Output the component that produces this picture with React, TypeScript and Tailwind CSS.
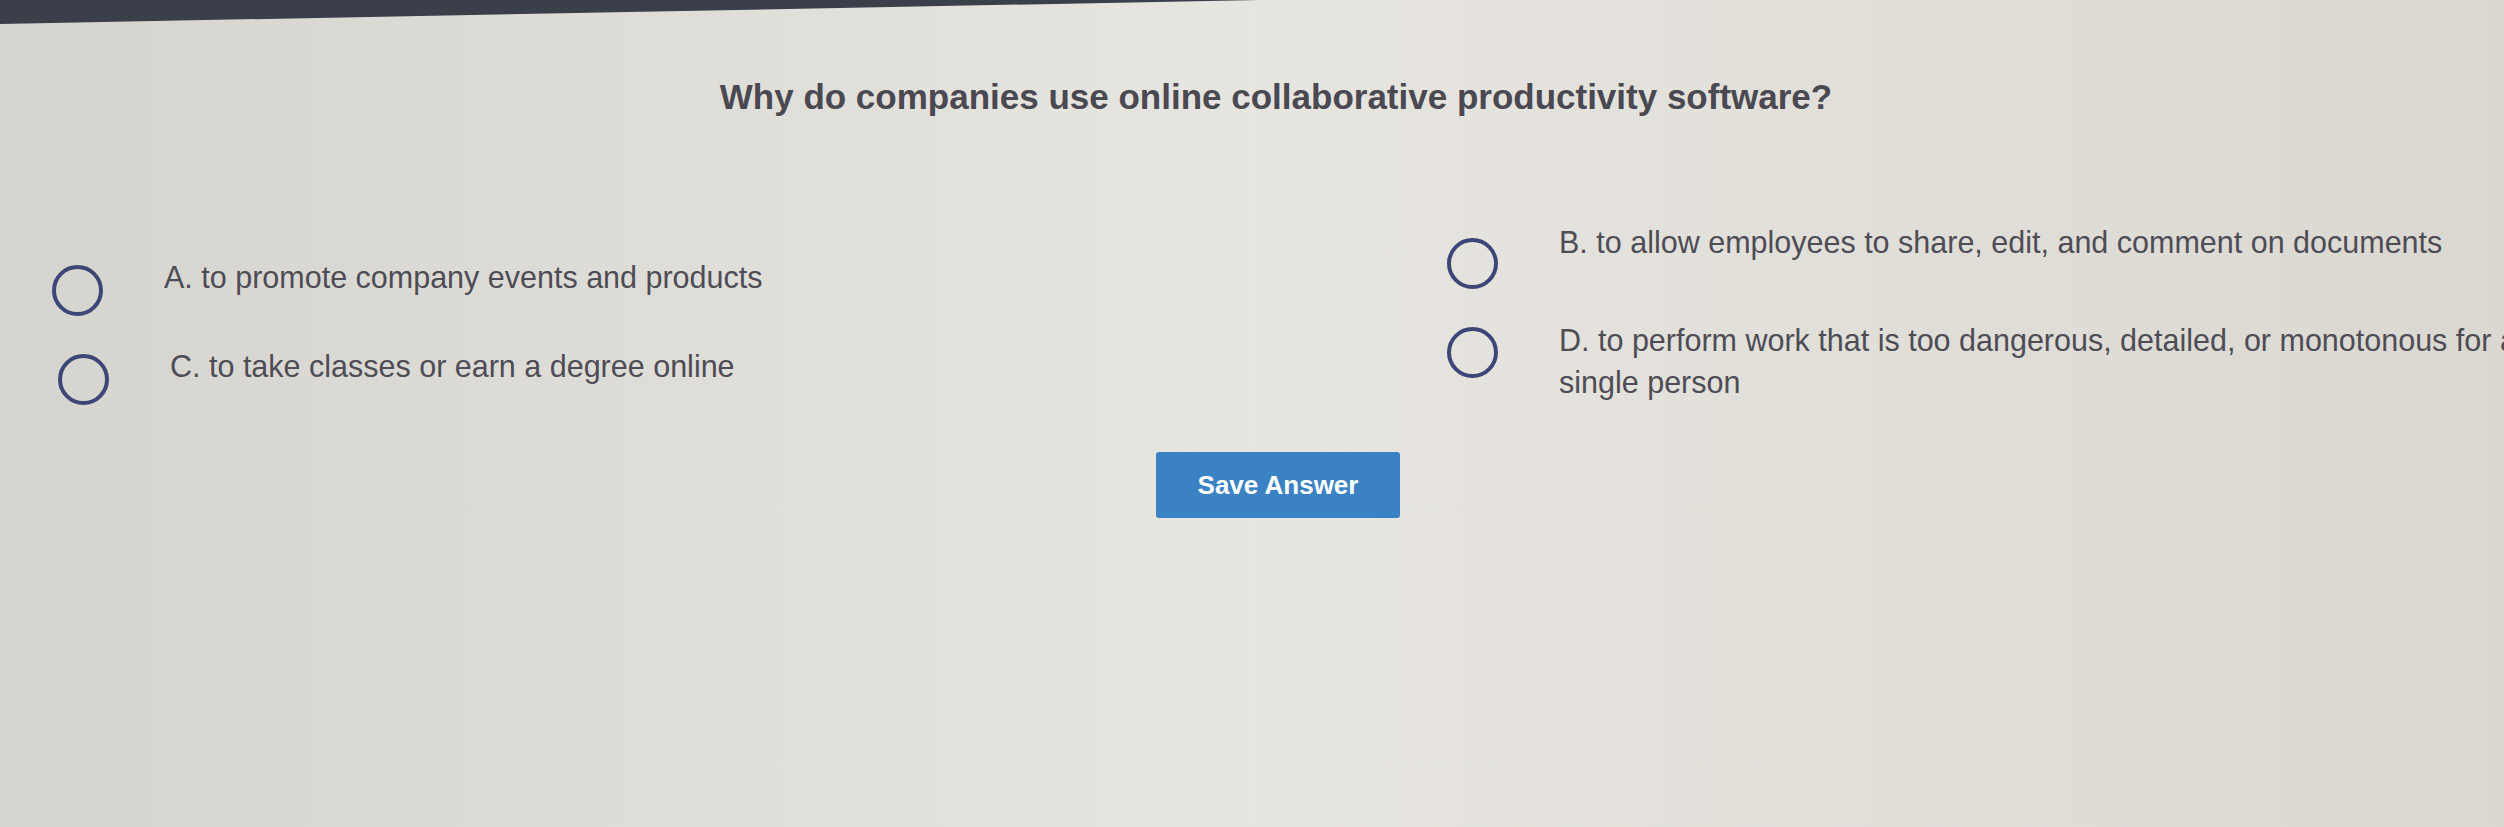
import React from "react";

interface Choice {
  label: string;
  rowClass: string;
  textClass: string;
}

const leftChoices: Choice[] = [
  { label: "A. to promote company events and products", rowClass: "", textClass: "-mt-[9px]" },
  { label: "C. to take classes or earn a degree online", rowClass: "pl-[6px]", textClass: "-mt-[9px]" },
];

const rightChoices: Choice[] = [
  {
    label: "B. to allow employees to share, edit, and comment on documents",
    rowClass: "",
    textClass: "-mt-[17px]",
  },
  {
    label:
      "D. to perform work that is too dangerous, detailed, or monotonous for a single person",
    rowClass: "",
    textClass: "-mt-[8px]",
  },
];

const Radio = () => (
  <span className="block w-[51px] h-[51px] shrink-0 rounded-full border-[4px] border-[#3d4777]" />
);

const ChoiceRow = ({ choice }: { choice: Choice }) => (
  <label className={`flex items-start gap-[61px] cursor-pointer ${choice.rowClass}`}>
    <Radio />
    <span className={`w-[980px] text-[30.5px] leading-[42px] text-[#4e4c55] ${choice.textClass}`}>
      {choice.label}
    </span>
  </label>
);

export default function App() {
  return (
    <div
      className="relative w-full h-[827px] overflow-hidden bg-gradient-to-r from-[#d6d4ce] via-[#e7e5df] to-[#dad8d1]"
      style={{ fontFamily: '"Liberation Sans", Arial, sans-serif' }}
    >
      {/* dark edge of the monitor bezel at the top of the photo */}
      <div className="absolute top-0 left-0 w-[1260px] h-[24px] bg-[#3a3f4a] [clip-path:polygon(0_0,100%_0,0_100%)]" />

      <div className="w-[2552px] pt-[77px]">
        <h1 className="text-center text-[35px] leading-[40px] font-bold text-[#4a4851]">
          Why do companies use online collaborative productivity software?
        </h1>

        <div className="grid grid-cols-[1395px_1fr] pl-[52px] mt-[121px]">
          <div className="flex flex-col gap-[38px] pt-[27px]">
            {leftChoices.map((c) => (
              <ChoiceRow key={c.label} choice={c} />
            ))}
          </div>
          <div className="flex flex-col gap-[38px]">
            {rightChoices.map((c) => (
              <ChoiceRow key={c.label} choice={c} />
            ))}
          </div>
        </div>

        <div className="flex justify-center mt-[47px] pl-[4px]">
          <button className="w-[244px] h-[66px] rounded-[3px] bg-[#3b82c4] text-white text-[26px] font-bold">
            Save Answer
          </button>
        </div>
      </div>
    </div>
  );
}
